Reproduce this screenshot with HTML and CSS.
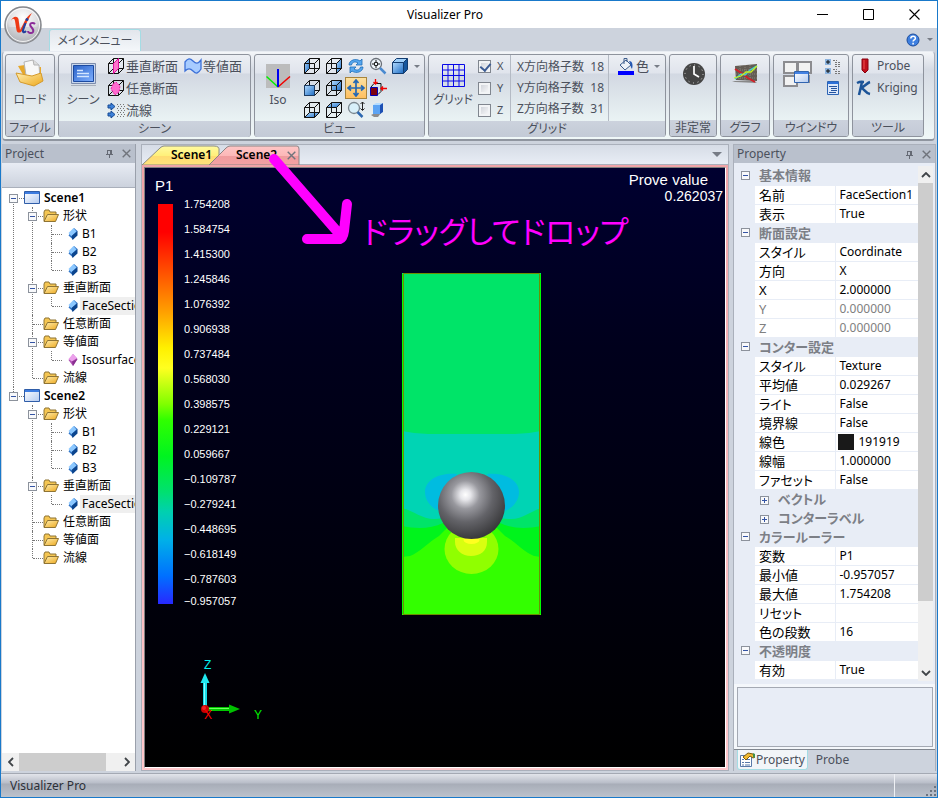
FILE: index.html
```html
<!DOCTYPE html>
<html lang="ja">
<head>
<meta charset="utf-8">
<title>Visualizer Pro</title>
<link rel="stylesheet" href="styles.css">
</head>
<body>
<svg class="defs" aria-hidden="true">
  <defs>
    <linearGradient id="blueFace" x1="0" y1="0" x2="1" y2="1"><stop offset="0" stop-color="#b4dcff"/><stop offset="1" stop-color="#1c6cc4"/></linearGradient>
    <linearGradient id="gold" x1="0" y1="0" x2="1" y2="1"><stop offset="0" stop-color="#ffeeb0"/><stop offset="1" stop-color="#eda81c"/></linearGradient>
    <linearGradient id="winBlue" x1="0" y1="0" x2="1" y2="1"><stop offset="0" stop-color="#fff"/><stop offset="1" stop-color="#b4cbf0"/></linearGradient>
    <linearGradient id="screen" x1="0" y1="0" x2="1" y2="1"><stop offset="0" stop-color="#2a62c8"/><stop offset="1" stop-color="#7fb0ff"/></linearGradient>
    <radialGradient id="orb" cx=".5" cy=".3" r=".7"><stop offset="0" stop-color="#fff"/><stop offset=".6" stop-color="#dcdcdf"/><stop offset="1" stop-color="#8d8f94"/></radialGradient>
    <radialGradient id="ball" cx=".41" cy=".34" r=".66"><stop offset="0" stop-color="#fff"/><stop offset=".12" stop-color="#e6e6ea"/><stop offset=".32" stop-color="#98989e"/><stop offset=".62" stop-color="#636368"/><stop offset="1" stop-color="#3a3a3c"/></radialGradient>
    <linearGradient id="tabYellow" x1="0" y1="0" x2="0" y2="1"><stop offset="0" stop-color="#fffaa0"/><stop offset=".5" stop-color="#fff07a"/><stop offset=".52" stop-color="#ffdc70"/><stop offset="1" stop-color="#ffe27c"/></linearGradient>
    <linearGradient id="tabPink" x1="0" y1="0" x2="0" y2="1"><stop offset="0" stop-color="#ffc6c6"/><stop offset=".5" stop-color="#fcb8b8"/><stop offset=".52" stop-color="#f09c9e"/><stop offset="1" stop-color="#f2a2a4"/></linearGradient>
    <symbol id="wire" viewBox="0 0 18 18"><path d="M1.5 6.5h10v10h-10zM6.5 1.5h10v10h-10zM1.5 6.5l5-5M11.5 6.5l5-5M1.5 16.5l5-5M11.5 16.5l5-5" fill="none" stroke="#111"/></symbol>
    <symbol id="cube-left" viewBox="0 0 18 18"><path d="M1.5 6.5l5-5v10l-5 5z" fill="url(#blueFace)"/><use href="#wire" width="18" height="18"/></symbol>
    <symbol id="cube-right" viewBox="0 0 18 18"><path d="M11.5 6.5l5-5v10l-5 5z" fill="url(#blueFace)"/><use href="#wire" width="18" height="18"/></symbol>
    <symbol id="cube-front" viewBox="0 0 18 18"><use href="#wire" width="18" height="18"/><path d="M1.5 6.5h10v10h-10z" fill="url(#blueFace)" stroke="#1c3c64"/></symbol>
    <symbol id="cube-back" viewBox="0 0 18 18"><path d="M6.5 1.5h10v10h-10z" fill="url(#blueFace)"/><use href="#wire" width="18" height="18"/></symbol>
    <symbol id="cube-bottom" viewBox="0 0 18 18"><path d="M1.5 16.5l5-5h10l-5 5z" fill="url(#blueFace)"/><use href="#wire" width="18" height="18"/></symbol>
    <symbol id="cube-top" viewBox="0 0 18 18"><path d="M1.5 6.5l5-5h10l-5 5z" fill="url(#blueFace)"/><use href="#wire" width="18" height="18"/></symbol>
    <symbol id="cube-solid" viewBox="0 0 18 18"><path d="M1.5 5.5l4-4h11l-4 4z" fill="#9fd0fa"/><path d="M12.5 5.5l4-4v11l-4 4z" fill="#16579e"/><path d="M1.500 5.500h11v11h-11z" fill="url(#blueFace)"/><path d="M1.500 5.500l4-4h11v11l-4 4h-11zM1.500 5.500h11v11M12.500 5.500l4-4" fill="none" stroke="#123c70"/></symbol>
    <symbol id="slice" viewBox="0 0 18 18"><use href="#wire" width="18" height="18"/><path d="M6.500 6.500l5-5v10l-5 5z" fill="#f7c" stroke="#e0109c"/></symbol>
    <symbol id="free-slice" viewBox="0 0 18 18"><use href="#wire" width="18" height="18"/><path d="M9 3l4 4-1 6-4 3-4-6 2-5z" fill="#ff6cd0" stroke="#f01ca8" stroke-dasharray="2 1"/></symbol>
    <symbol id="stream" viewBox="0 0 18 18"><path d="M1 4h3V2l4 3.500L4 9V7H1zM1 12h3v-2l4 3.500L4 17v-2H1z" fill="#3b80d8" stroke="#174a94"/><g stroke="#777" stroke-dasharray="1 2"><path d="M10 3.500h7M11 5.500h7M10 7.500h7M11 9.500h7M10 11.500h7M11 13.500h7M10 15.500h7"/></g></symbol>
    <symbol id="iso-wave" viewBox="0 0 18 18"><path d="M1 5c3-4 5-4 8-1s5 3 8-1v9c-3 5-5 5-8 2s-5-3-8 0z" fill="#a8ccff" stroke="#3c70d8" stroke-width="1.300"/></symbol>
    <symbol id="folder" viewBox="0 0 16 14"><path d="M1 12V3l1-2h4l1 2h6v3" fill="#f5c652" stroke="#8f7434"/><path d="M1 12.500l3.500-7H15.500l-3 7z" fill="url(#gold)" stroke="#8f7434"/></symbol>
    <symbol id="scene" viewBox="0 0 16 14"><path d="M.5.500h15v12H.5z" fill="url(#winBlue)" stroke="#2f5da8"/><path d="M1 1h14v2H1z" fill="#3d7ce0"/></symbol>
    <symbol id="gem" viewBox="0 0 10 12"><path d="M6 0l3.500 3L5 11.500.5 7.500z" fill="#2f74c8"/><path d="M5.500 0L.5 5l3 3.500 5-5z" fill="#8cc8ff"/><path d="M9.500 3v4.500L4.500 12 3.500 8z" fill="#0c458e"/></symbol>
    <symbol id="gem-pink" viewBox="0 0 10 12"><path d="M5 0l4.500 5L5 12 .5 6z" fill="#b050b4"/><path d="M5 0L.5 5 4 7.500 9 4z" fill="#eca0ec"/><path d="M9.500 5L5 12 4 7.500z" fill="#8a3090"/></symbol>
    <symbol id="pin" viewBox="0 0 9 9"><path d="M2.500 1v4.500M6.500 1v4.500M2 1.500h5M5.500 1v4M1 5.500h7M4.500 6v3" fill="none" stroke="#656a74"/></symbol>
    <symbol id="cross" viewBox="0 0 9 9"><path d="M.7.7l7.600 7.600M8.300.7L.7 8.300" fill="none" stroke="#70747c" stroke-width="1.400"/></symbol>
    <symbol id="chev" viewBox="0 0 10 6"><path d="M1 5l4-4 4 4" fill="none" stroke="#404448" stroke-width="1.800"/></symbol>
  </defs>
</svg>

<div class="window">
  <header class="titlebar">
    <h1>Visualizer Pro</h1>
    <div class="caption-buttons">
      <button aria-label="最小化"><svg width="11" height="11"><path d="M0 5.500h11" stroke="#000"/></svg></button>
      <button aria-label="最大化"><svg width="11" height="11"><path d="M.5.500h10v10H.5z" fill="none" stroke="#000"/></svg></button>
      <button aria-label="閉じる"><svg width="11" height="11"><path d="M.5.500l10 10M10.500.500l-10 10" stroke="#000" stroke-width="1.100"/></svg></button>
    </div>
  </header>
  <button class="app-orb" aria-label="アプリケーション">
    <svg width="40" height="40" viewBox="0 0 40 40">
      <circle cx="20" cy="20" r="18" fill="url(#orb)" stroke="#85878c" stroke-width="1.500"/>
      <path d="M4 22h32a16 16 0 0 1-32 0z" fill="#c4c6cb" opacity=".6"/>
      <circle cx="20" cy="20" r="16.500" fill="none" stroke="#fff" opacity=".8"/>
      <path d="M8 16c1-4 6-6 7.500-2l1.500 11c3-4 5-13 12-17-4 6-6 13-11 19-2 1-4 1-4.500-2l-1.500-9c-.5-3-2.500-3-4 0z" fill="#ee3a16"/>
      <path d="M22.500 18l-2.500 7c-.5 2.500 1 3 3 1" fill="none" stroke="#24409c" stroke-width="2.200"/>
      <circle cx="24" cy="14.500" r="1.500" fill="#24409c"/>
      <path d="M32 19c-2-2-6-1-4.500 2 1 2 4 3 2.500 6-1.500 2-5 1-5-1" fill="none" stroke="#8b2c98" stroke-width="2"/>
    </svg>
  </button>
  <nav class="tabstrip">
    <button class="ribbon-tab">メインメニュー</button>
    <button class="help" aria-label="ヘルプ">
      <svg width="14" height="14"><circle cx="7" cy="7" r="6" fill="#3d7fe0" stroke="#1c4c9c"/><path d="M4.800 5.500c0-3 4.600-3 4.600-.3 0 1.600-2.300 1.600-2.300 3.300M7.100 9.800v1.700" fill="none" stroke="#fff" stroke-width="1.500"/></svg>
      <i class="caret"></i>
    </button>
  </nav>

  <section class="ribbon" aria-label="リボン">
    <div class="group g-file">
      <div class="body">
        <button class="big">
          <svg width="30" height="30" viewBox="0 0 30 30"><path d="M3 7l7-1 5 3 11-1v14l-12 4z" fill="#e6a82c"/><path d="M9 3l9-2 6 5 1 14-13 3z" fill="#f8f8f8" stroke="#b4b4b4"/><path d="M18 1l1 5h5" fill="#ddd" stroke="#b4b4b4"/><path d="M1 14l16 3 9-3 2 8-9 5L5 23z" fill="url(#gold)" stroke="#d49a2c"/></svg>
          <span>ロード</span>
        </button>
      </div>
      <h2>ファイル</h2>
    </div>
    <div class="group g-scene">
      <div class="body">
        <button class="big">
          <svg width="30" height="30" viewBox="0 0 30 30"><path d="M3.500 4.500h24v20h-24z" fill="#c8d6ec" stroke="#7c8cac"/><path d="M5.500 6.500h20v16h-20z" fill="url(#screen)" stroke="#1c4aa0"/><path d="M9 11.500h6M9 14.500h12M9 17.500h12" stroke="#d4e6ff" stroke-width="1.500"/><path d="M3 26.500h25" stroke="#a8b0bc"/></svg>
          <span>シーン</span>
        </button>
        <div class="rows">
          <div class="row">
            <button class="small"><svg width="18" height="18"><use href="#slice"/></svg>垂直断面</button>
            <button class="small"><svg width="18" height="18"><use href="#iso-wave"/></svg>等値面</button>
          </div>
          <div class="row"><button class="small"><svg width="18" height="18"><use href="#free-slice"/></svg>任意断面</button></div>
          <div class="row"><button class="small"><svg width="18" height="18"><use href="#stream"/></svg>流線</button></div>
        </div>
      </div>
      <h2>シーン</h2>
    </div>
    <div class="group g-view">
      <div class="body">
        <button class="big">
          <svg width="30" height="30" viewBox="0 0 30 30"><path d="M3 5h24v24H3z" fill="#bcbcbc"/><path d="M15 28L3.500 17.500" stroke="#00f000" stroke-width="1.500"/><path d="M15 28l12-10.500" stroke="#f00000" stroke-width="1.500"/><path d="M15 10v18" stroke="#0000f0" stroke-width="2"/></svg>
          <span class="latin">Iso</span>
        </button>
        <div class="view-grid">
          <button aria-label="左"><svg width="18" height="18"><use href="#cube-left"/></svg></button>
          <button aria-label="右"><svg width="18" height="18"><use href="#cube-right"/></svg></button>
          <button aria-label="更新"><svg width="18" height="18"><path d="M2 8c0-5 7-7 11-4l2-2v6H9l2-2C8 4 5 5 4.500 8zM16 10c0 5-7 7-11 4l-2 2v-6h6l-2 2c3 2 6 1 6.500-2z" fill="#58a8f0" stroke="#1c6cb8" stroke-width=".8"/></svg></button>
          <button aria-label="全体"><svg width="18" height="18"><circle cx="7" cy="7" r="5.500" fill="#eef4fa" stroke="#6a7078" stroke-width="1.300"/><path d="M7 3v8M3 7h8" stroke="#111" stroke-dasharray="2 4"/><path d="M5.500 5.500h3v3h-3z" fill="none" stroke="#222"/><path d="M11 11l5.500 5.500" stroke="#4a8ad0" stroke-width="2.500"/></svg></button>
          <button class="wide" aria-label="表示"><svg width="18" height="18"><use href="#cube-solid"/></svg><i class="caret"></i></button>
          <button aria-label="前"><svg width="18" height="18"><use href="#cube-front"/></svg></button>
          <button aria-label="後"><svg width="18" height="18"><use href="#cube-back"/></svg></button>
          <button class="active" aria-label="移動"><svg width="18" height="18"><path d="M9 1v16M1 9h16M6.500 4L9 1l2.500 3M6.500 14L9 17l2.500-3M4 6.500L1 9l3 2.500M14 6.500L17 9l-3 2.500" fill="none" stroke="#2468b4" stroke-width="1.700"/></svg></button>
          <button class="span2" aria-label="回転"><svg width="18" height="18"><path d="M1.500 8.500h7v8h-7z" fill="#7c0010" stroke="#0000b8"/><path d="M2 8l3-3.500h7v8l-3 3" fill="none" stroke="#111"/><path d="M6.500 0v5M4.500 3l2 2 2-2M18 9.500h-6M14 7.500l-2 2 2 2" fill="none" stroke="#f00000" stroke-width="1.300"/></svg></button>
          <button aria-label="下"><svg width="18" height="18"><use href="#cube-bottom"/></svg></button>
          <button aria-label="上"><svg width="18" height="18"><use href="#cube-top"/></svg></button>
          <button aria-label="拡大"><svg width="18" height="18"><circle cx="7" cy="7" r="5.500" fill="#d8f0fa" stroke="#7c8890" stroke-width="1.300"/><path d="M10.500 11l5 5" stroke="#2c68b0" stroke-width="2.500"/><path d="M15.500 1v8M13.500 3l2-2 2 2M13.500 7.500l2 2 2-2" fill="none" stroke="#222"/></svg></button>
          <button aria-label="影"><svg width="18" height="18"><path d="M2 14l4-2h6l-3 4H5z" fill="#8c8c8c"/><path d="M4 4h7v9H4z" fill="#5ca4f4"/><path d="M4 4l3-2h7l-3 2z" fill="#b4dcff"/><path d="M11 4l3-2v9l-3 2z" fill="#1c50b4"/></svg></button>
        </div>
      </div>
      <h2>ビュー</h2>
    </div>
    <div class="group g-grid">
      <div class="body">
        <button class="big">
          <svg width="30" height="30" viewBox="0 0 30 30"><path d="M4.500 5.500h22v22h-22zM10 5v23M15.500 5v23M21 5v23M4 11h23M4 16.500h23M4 22h23" fill="none" stroke="#0808e8"/></svg>
          <span>グリッド</span>
        </button>
        <div class="rows checks">
          <label><input type="checkbox" checked>X</label>
          <label><input type="checkbox">Y</label>
          <label><input type="checkbox">Z</label>
        </div>
        <dl class="counts">
          <div><dt>X方向格子数</dt><dd>18</dd></div>
          <div><dt>Y方向格子数</dt><dd>18</dd></div>
          <div><dt>Z方向格子数</dt><dd>31</dd></div>
        </dl>
        <button class="small color"><svg width="18" height="18"><path d="M3 8l6-5 5 5-6 5z" fill="#eef2f8" stroke="#3c5c8c"/><path d="M7 7V1.500h3V5" fill="none" stroke="#3c5c8c"/><path d="M12 4c4 0 4 5 3 8-2-2-1-5-3-8z" fill="#2458b4"/><path d="M1 14h16v4H1z" fill="#0000ff"/></svg>色<i class="caret"></i></button>
      </div>
      <h2>グリッド</h2>
    </div>
    <div class="group g-time">
      <div class="body">
        <button class="big" aria-label="非定常">
          <svg width="30" height="30" viewBox="0 0 30 30"><circle cx="15" cy="15" r="11" fill="#454545"/><circle cx="15" cy="15" r="9" fill="none" stroke="#ddd" stroke-dasharray="1 3.700"/><path d="M15 7v8l5 3" fill="none" stroke="#fff" stroke-width="1.700"/></svg>
        </button>
      </div>
      <h2>非定常</h2>
    </div>
    <div class="group g-chart">
      <div class="body">
        <button class="big" aria-label="グラフ">
          <svg width="30" height="30" viewBox="0 0 30 30"><path d="M5 7l22-2v17L6 21z" fill="#635c54"/><path d="M2 22h22l3 2-22-1z" fill="#888"/><path d="M6 11h21M6 15h21M6 19h21M10 7v14M15 6v15M20 6v15" stroke="#8a8278" stroke-dasharray="1 1"/><path d="M5 10l8 5 5 4 7 4" fill="none" stroke="#d02028" stroke-width="2"/><path d="M5 20l6-5 4 1 5-5 7-4" fill="none" stroke="#40d0d0" stroke-width="1.500"/><path d="M4 19l7-2 5-4 5 0 6-6" fill="none" stroke="#c8f020" stroke-width="1.300"/></svg>
        </button>
      </div>
      <h2>グラフ</h2>
    </div>
    <div class="group g-window">
      <div class="body">
        <button class="big" aria-label="ウインドウ配置">
          <svg width="32" height="30" viewBox="0 0 32 30"><path d="M2 3h13v11H2zM16 3h13v11H16zM2 17h13v10H2zM16 17h11v6H16z" fill="#f2f2f2" stroke="#8c8c90" stroke-width="2"/><path d="M12.500 12.500h14v11h-14z" fill="url(#winBlue)" stroke="#3064b0"/><path d="M13 13h13v2H13z" fill="#4482e4"/></svg>
        </button>
        <div class="rows">
          <button class="icon" aria-label="ツリー"><svg width="18" height="18"><path d="M1 2h6v6H1zM1 11h6v6H1z" fill="#8cb4e0"/><path d="M4 3v4M2 5h4M4 12v4M2 14h4" stroke="#111"/><path d="M9 3.500h4M11 5.500h6M11 7.500h6M9 12.500h4M11 14.500h6M11 16.500h6M11 9.500h6" stroke="#777" stroke-dasharray="2 1"/></svg></button>
          <button class="icon" aria-label="一覧"><svg width="18" height="18"><path d="M3.500 2.500h11v13h-11z" fill="#dce8fa" stroke="#2c64b4"/><path d="M4 3h10v2H4z" fill="#2c70d8"/><path d="M5 7.500h8M7 9.500h6M7 11.500h6M5 13.500h7" stroke="#2454a0"/></svg></button>
        </div>
      </div>
      <h2>ウインドウ</h2>
    </div>
    <div class="group g-tool">
      <div class="body">
        <div class="rows">
          <button class="small latin"><svg width="18" height="18"><path d="M9 2h6v11l-3 3-3-3z" fill="#c0101c" stroke="#880010"/><path d="M11 3v9" stroke="#f05050"/></svg>Probe</button>
          <button class="small latin"><svg width="18" height="18"><path d="M9 3L6 16M4 4c4-2 6-1 7-1M17 3c-3 1-6 5-9 6 3 0 4 5 9 6" fill="none" stroke="#1c5498" stroke-width="2.500"/></svg>Kriging</button>
        </div>
      </div>
      <h2>ツール</h2>
    </div>
  </section>

  <main>
    <aside class="pane project">
      <header><h2>Project</h2><button aria-label="固定"><svg width="9" height="9"><use href="#pin"/></svg></button><button aria-label="閉じる"><svg width="9" height="9"><use href="#cross"/></svg></button></header>
      <div class="toolbar"></div>
      <div class="tree">
        <ul>
          <li><div class="node"><button class="toggle" aria-label="折りたたむ"></button><svg width="16" height="14"><use href="#scene"/></svg><b>Scene1</b></div>
            <ul>
              <li><div class="node"><button class="toggle" aria-label="折りたたむ"></button><svg width="16" height="14"><use href="#folder"/></svg><span>形状</span></div>
                <ul class="leaves">
                  <li><div class="node"><svg width="10" height="12"><use href="#gem"/></svg><span>B1</span></div></li>
                  <li><div class="node"><svg width="10" height="12"><use href="#gem"/></svg><span>B2</span></div></li>
                  <li><div class="node"><svg width="10" height="12"><use href="#gem"/></svg><span>B3</span></div></li>
                </ul>
              </li>
              <li><div class="node"><button class="toggle" aria-label="折りたたむ"></button><svg width="16" height="14"><use href="#folder"/></svg><span>垂直断面</span></div>
                <ul class="leaves"><li><div class="node"><svg width="10" height="12"><use href="#gem"/></svg><span class="selected">FaceSection1</span></div></li></ul>
              </li>
              <li><div class="node"><svg width="16" height="14"><use href="#folder"/></svg><span>任意断面</span></div></li>
              <li><div class="node"><button class="toggle" aria-label="折りたたむ"></button><svg width="16" height="14"><use href="#folder"/></svg><span>等値面</span></div>
                <ul class="leaves"><li><div class="node"><svg width="10" height="12"><use href="#gem-pink"/></svg><span>Isosurface1</span></div></li></ul>
              </li>
              <li><div class="node"><svg width="16" height="14"><use href="#folder"/></svg><span>流線</span></div></li>
            </ul>
          </li>
          <li><div class="node"><button class="toggle" aria-label="折りたたむ"></button><svg width="16" height="14"><use href="#scene"/></svg><b>Scene2</b></div>
            <ul>
              <li><div class="node"><button class="toggle" aria-label="折りたたむ"></button><svg width="16" height="14"><use href="#folder"/></svg><span>形状</span></div>
                <ul class="leaves">
                  <li><div class="node"><svg width="10" height="12"><use href="#gem"/></svg><span>B1</span></div></li>
                  <li><div class="node"><svg width="10" height="12"><use href="#gem"/></svg><span>B2</span></div></li>
                  <li><div class="node"><svg width="10" height="12"><use href="#gem"/></svg><span>B3</span></div></li>
                </ul>
              </li>
              <li><div class="node"><button class="toggle" aria-label="折りたたむ"></button><svg width="16" height="14"><use href="#folder"/></svg><span>垂直断面</span></div>
                <ul class="leaves"><li><div class="node"><svg width="10" height="12"><use href="#gem"/></svg><span class="selected">FaceSection1</span></div></li></ul>
              </li>
              <li><div class="node"><svg width="16" height="14"><use href="#folder"/></svg><span>任意断面</span></div></li>
              <li><div class="node"><svg width="16" height="14"><use href="#folder"/></svg><span>等値面</span></div></li>
              <li><div class="node"><svg width="16" height="14"><use href="#folder"/></svg><span>流線</span></div></li>
            </ul>
          </li>
        </ul>
      </div>
      <div class="hscroll">
        <button class="to-left" aria-label="左へ"><svg width="10" height="6"><use href="#chev"/></svg></button>
        <div class="track"><div class="thumb"></div></div>
        <button class="to-right" aria-label="右へ"><svg width="10" height="6"><use href="#chev"/></svg></button>
      </div>
    </aside>

    <section class="center">
      <div class="doc-tabs">
        <button class="doc-tab first"><svg width="92" height="20"><path d="M0 20L18 3q2-2 4-2h50q6 0 5 5v14z" fill="url(#tabYellow)" stroke="#8c8c84"/></svg><span>Scene1</span></button>
        <button class="doc-tab second"><svg width="92" height="20"><path d="M0 20L17 3q2-2 4-2h67q2 0 2 3v16z" fill="url(#tabPink)" stroke="#8c8484"/></svg><span>Scene2</span><svg class="x" width="9" height="9"><use href="#cross"/></svg></button>
        <button class="doc-menu" aria-label="タブ一覧"><i class="caret"></i></button>
      </div>
      <div class="frame">
        <div class="canvas">
          <div class="legend">
            <h3>P1</h3>
            <div class="scale">
              <div class="ramp"></div>
              <ol>
                <li>1.754208</li><li>1.584754</li><li>1.415300</li><li>1.245846</li><li>1.076392</li><li>0.906938</li><li>0.737484</li><li>0.568030</li><li>0.398575</li><li>0.229121</li><li>0.059667</li><li>−0.109787</li><li>−0.279241</li><li>−0.448695</li><li>−0.618149</li><li>−0.787603</li><li>−0.957057</li>
              </ol>
            </div>
            <svg class="axes" width="80" height="70">
              <text x="6" y="10" fill="#00f0f0">Z</text><text x="56" y="60" fill="#00f000">Y</text>
              <path d="M5 22h4v29H5z" fill="#18dce8"/><path d="M6.500 24v26" stroke="#8ff"/><path d="M2.500 24L7 14l4.500 10z" fill="#20e8f0"/>
              <path d="M8 48h24v4H8z" fill="#00c800"/><path d="M9 49.500h22" stroke="#70ff60"/><path d="M31 45.500l11 4.500-11 4.500z" fill="#00c000"/>
              <circle cx="7" cy="50" r="4" fill="#c80000"/><circle cx="6" cy="49" r="2" fill="#f02020"/>
              <text x="6" y="60" fill="#ff0000">X</text>
            </svg>
          </div>
          <div class="probe"><div>Prove value</div><div class="num">0.262037</div></div>
          <svg class="model" width="139" height="342" viewBox="0 0 139 342">
            <path d="M0 0h139v342H0z" fill="#00e468"/>
            <path d="M0 158l12 2 14 1h87l14-1 12-2v77c-10 3-19 12-32 11l-30-2H62l-30 2C20 246 12 238 0 235z" fill="#00d4b4"/>
            <path d="M0 253c14 3 29 3 41-3h57c12 6 27 6 41 3v89H0z" fill="#00f41c"/>
            <path d="M0 284l8-1c9-3 20-15 29-20l8-8h50l8 8c9 5 20 17 29 20l7 1v58H0z" fill="#33ff00"/>
            <path d="M55 201c-14-2-32 4-32 18 0 9 7 17 15 19zM85 201c14-2 32 4 32 18 0 9-7 17-15 19z" fill="#00bce0"/>
            <ellipse cx="69.500" cy="276" rx="27" ry="25" fill="#90ff00"/>
            <path d="M53 265v4c0 8 7 14 16 14s16-5 16-14v-4z" fill="#d8ff10"/>
            <ellipse cx="69.500" cy="267" rx="8" ry="4" fill="#ffff20"/>
            <circle cx="69.500" cy="232.500" r="33.500" fill="url(#ball)"/>
            <path d="M1.500.500h136v341H1.500z" fill="none" stroke="#6c9000"/>
            <path d="M.5 1v340M138.500 1v340" stroke="#00ff00"/>
          </svg>
        </div>
      </div>
      <svg class="drag-arrow" width="100" height="106" aria-hidden="true"><path d="M14 16l68 78M47 96h33q3-1 4-8l3-27" fill="none" stroke="#ff00ff" stroke-width="10" stroke-linecap="round" stroke-linejoin="round"/></svg>
      <p class="drag-note">ドラッグしてドロップ</p>
    </section>

    <aside class="pane property">
      <header><h2>Property</h2><button aria-label="固定"><svg width="9" height="9"><use href="#pin"/></svg></button><button aria-label="閉じる"><svg width="9" height="9"><use href="#cross"/></svg></button></header>
      <div class="sheet">
        <div class="grid-clip">
          <table>
            <colgroup><col class="c-gutter"><col class="c-name"><col></colgroup>
            <tbody>
            <tr class="cat"><td><button class="toggle" aria-label="折りたたむ"></button></td><th colspan="2">基本情報</th></tr>
            <tr><td></td><th>名前</th><td>FaceSection1</td></tr>
            <tr><td></td><th>表示</th><td>True</td></tr>
            <tr class="cat"><td><button class="toggle" aria-label="折りたたむ"></button></td><th colspan="2">断面設定</th></tr>
            <tr><td></td><th>スタイル</th><td>Coordinate</td></tr>
            <tr><td></td><th>方向</th><td>X</td></tr>
            <tr><td></td><th>X</th><td>2.000000</td></tr>
            <tr class="off"><td></td><th>Y</th><td>0.000000</td></tr>
            <tr class="off"><td></td><th>Z</th><td>0.000000</td></tr>
            <tr class="cat"><td><button class="toggle" aria-label="折りたたむ"></button></td><th colspan="2">コンター設定</th></tr>
            <tr><td></td><th>スタイル</th><td>Texture</td></tr>
            <tr><td></td><th>平均値</th><td>0.029267</td></tr>
            <tr><td></td><th>ライト</th><td>False</td></tr>
            <tr><td></td><th>境界線</th><td>False</td></tr>
            <tr><td></td><th>線色</th><td><span class="swatch"></span>191919</td></tr>
            <tr><td></td><th>線幅</th><td>1.000000</td></tr>
            <tr><td></td><th>ファセット</th><td>False</td></tr>
            <tr class="cat sub"><td></td><th colspan="2"><button class="toggle plus" aria-label="展開"></button>ベクトル</th></tr>
            <tr class="cat sub"><td></td><th colspan="2"><button class="toggle plus" aria-label="展開"></button>コンターラベル</th></tr>
            <tr class="cat"><td><button class="toggle" aria-label="折りたたむ"></button></td><th colspan="2">カラールーラー</th></tr>
            <tr><td></td><th>変数</th><td>P1</td></tr>
            <tr><td></td><th>最小値</th><td>-0.957057</td></tr>
            <tr><td></td><th>最大値</th><td>1.754208</td></tr>
            <tr><td></td><th>リセット</th><td></td></tr>
            <tr><td></td><th>色の段数</th><td>16</td></tr>
            <tr class="cat"><td><button class="toggle" aria-label="折りたたむ"></button></td><th colspan="2">不透明度</th></tr>
            <tr><td></td><th>有効</th><td>True</td></tr>
            </tbody>
          </table>
        </div>
        <div class="vscroll">
          <button aria-label="上へ"><svg width="10" height="6"><use href="#chev"/></svg></button>
          <div class="track"><div class="thumb"></div></div>
          <button class="to-down" aria-label="下へ"><svg width="10" height="6"><use href="#chev"/></svg></button>
        </div>
      </div>
      <div class="desc-wrap"><div class="desc"></div></div>
      <div class="pane-tabs">
        <button class="on"><svg width="16" height="16"><path d="M1.500 3.500h11v11h-11z" fill="#fff" stroke="#5878a8"/><path d="M3 7.500h2M6 7.500h5M3 10.500h2M6 10.500h5M3 13h2M6 13h5" stroke="#5878a8"/><path d="M4 5l5-4 5 1 2 3-2 1-3-2-4 4z" fill="#f0b830" stroke="#7c5c10"/><path d="M14 1l2 1v4l-2-1z" fill="#409048"/></svg>Property</button>
        <button>Probe</button>
      </div>
    </aside>
  </main>

  <footer class="status"><span>Visualizer Pro</span><div class="corner"><svg width="12" height="12"><path d="M9 1h2v2H9zM5 5h2v2H5zM9 5h2v2H9zM1 9h2v2H1zM5 9h2v2H5zM9 9h2v2H9z" fill="#6c7480"/></svg></div></footer>
</div>
</body>
</html>
```
FILE: styles.css
```css
* { box-sizing: border-box; }

body {
  margin: 0;
  font-family: "Noto Sans", "Noto Sans CJK JP", sans-serif;
  font-size: 12px;
  line-height: 18px;
  font-feature-settings: "palt";
  color: #000;
}

h1, h2, h3, p, ul, ol, dl, dd { margin: 0; padding: 0; font-weight: 400; font-size: inherit; }
ul, ol { list-style: none; }
svg { display: block; flex: none; }
.defs { position: absolute; width: 0; height: 0; }

button {
  font: inherit;
  font-feature-settings: inherit;
  color: inherit;
  background: none;
  border: 0;
  padding: 0;
  margin: 0;
}

.window {
  position: relative;
  display: flex;
  flex-direction: column;
  height: 100vh;
  border: 1px solid #1979ca;
  background: #cdd3dd;
  overflow: hidden;
}

.caret {
  flex: none;
  width: 0;
  height: 0;
  border: 3px solid transparent;
  border-top-color: #777c86;
  border-bottom: 0;
}

/* Title bar */
.titlebar {
  position: relative;
  display: flex;
  align-items: center;
  height: 27px;
  background: #fff;
}
.titlebar h1 { flex: 1; text-align: center; padding-left: 90px; }
.caption-buttons { display: flex; }
.caption-buttons button { display: grid; place-items: center; width: 46px; height: 27px; }

.app-orb { position: absolute; left: 2px; top: 4px; z-index: 2; }

.tabstrip {
  display: flex;
  align-items: flex-end;
  justify-content: space-between;
  height: 23px;
  padding: 0 4px 0 48px;
  background: #cdd3dd;
}
.ribbon-tab {
  height: 22px;
  width: 92px;
  color: #4b505c;
  border: 1px solid #a4dce4;
  border-bottom: 0;
  border-radius: 3px 3px 0 0;
  background: linear-gradient(#e2e6ec, #f4f7fa);
}
.help { display: flex; align-items: center; gap: 7px; height: 23px; }

/* Ribbon */
.ribbon {
  display: flex;
  gap: 3px;
  margin: 0 2px 0 1px;
  padding: 2px;
  height: 90px;
  color: #4b505c;
  font-size: 13px;
  border: 1px solid #a9afba;
  border-top-color: #e8ecf2;
  border-bottom: 2px solid #8f959f;
  border-radius: 4px;
  background: linear-gradient(#f4f6f9, #d6dbe4 20%, #f0f8f8);
}
.group {
  display: flex;
  flex-direction: column;
  flex: none;
  border: 1px solid #8e939d;
  border-radius: 3px;
  background: linear-gradient(#eceff4, #e0e4ec 18px, #d2d8e2 19px, #eaf3f4 66px);
}
.body { display: flex; flex: 1; }
.group h2 {
  text-align: center;
  font-size: 12px;
  line-height: 16px;
  height: 16px;
  background: linear-gradient(#ccd2dd, #c3cad6);
  border-radius: 0 0 2px 2px;
}
.g-file { width: 50px; }
.g-scene { width: 193px; }
.g-view { width: 171px; }
.g-grid { width: 238px; }
.g-time { width: 48px; }
.g-chart { width: 50px; }
.g-window { width: 76px; }
.g-tool { width: 72px; }

.big {
  display: flex;
  flex-direction: column;
  align-items: center;
  gap: 2px;
  width: 48px;
  padding-top: 4px;
  flex: none;
  font-size: 12px;
}
.latin { font-size: 12px; }
.rows { display: flex; flex-direction: column; }
.row { display: flex; gap: 6px; }
.small { display: flex; align-items: center; gap: 1px; height: 22px; }
.small.latin { gap: 6px; }
.icon { display: grid; place-items: center; width: 22px; height: 22px; }

.g-view .big { width: 46px; }
.g-view .view-grid {
  display: grid;
  grid-template-columns: repeat(4, 22px) 32px;
  grid-auto-rows: 22px;
}
.view-grid button { display: grid; place-items: center; }
.view-grid .wide { display: flex; align-items: center; gap: 5px; padding-left: 2px; }
.view-grid .span2 { grid-column: 4 / span 2; justify-content: start; padding-left: 2px; }
.view-grid .active { border: 1px solid #a8843c; background: linear-gradient(#fce0a0, #ffc060); }

.checks { padding-left: 1px; width: 34px; border-right: 1px solid #b4bac4; }
.checks label { display: flex; align-items: center; gap: 6px; height: 22px; font-size: 11px; }
.checks input {
  appearance: none;
  flex: none;
  width: 13px;
  height: 13px;
  margin: 0;
  border: 1px solid #80868f;
  background: linear-gradient(135deg, #c8ccd4, #fff);
  box-shadow: inset 0 0 0 2px #f2f4f6;
}
.checks input:checked::before {
  content: "";
  display: block;
  width: 5px;
  height: 8px;
  margin-left: 3px;
  border: solid #3c5c94;
  border-width: 0 2px 2px 0;
  transform: rotate(40deg);
}
.counts { padding: 1px 4px 0 6px; border-right: 1px solid #b4bac4; }
.counts div { display: flex; align-items: center; justify-content: space-between; gap: 3px; height: 21px; width: 87px; white-space: nowrap; font-size: 12px; }
.color { padding-left: 8px; }
.color .caret { margin-left: 4px; }

/* Work area */
main { display: flex; flex: 1; min-height: 0; padding: 3px 1px 2px 1px; }
.pane { display: flex; flex-direction: column; flex: none; min-height: 0; }
.pane header {
  display: flex;
  align-items: center;
  height: 19px;
  padding: 0 4px 0 3px;
  background: #b9c0cc;
  color: #4b505c;
}
.pane header h2 { flex: 1; }
.pane header button { margin-left: 8px; }
.project { width: 134px; border-right: 1px solid #9aa0ab; background: #fff; }
.project .toolbar { height: 25px; background: linear-gradient(#e8ecf4, #ccd2dd); border-bottom: 1px solid #aab0bb; }

.tree { flex: 1; overflow: hidden; padding: 1px 0 0 2px; white-space: nowrap; font-size: 12px; }
.tree ul ul { margin-left: 19px; }
.tree li { position: relative; }
.tree li::before {
  content: "";
  position: absolute;
  left: 9px;
  top: 0;
  bottom: 0;
  border-left: 1px dotted #777;
}
.tree > ul > li:first-child::before { top: 9px; }
.tree li:last-child::before { bottom: auto; height: 9px; }
.node { position: relative; display: flex; align-items: center; height: 18px; padding-left: 20px; }
.node::before {
  content: "";
  position: absolute;
  left: 10px;
  top: 9px;
  width: 10px;
  border-top: 1px dotted #777;
}
.node span, .node b { padding: 0 2px; margin-left: 2px; }
.leaves .node { padding-left: 26px; }
.node .selected { background: #efefef; }
.node b { font-weight: 600; }

.toggle {
  position: relative;
  flex: none;
  width: 9px;
  height: 9px;
  border: 1px solid #8c929c;
  background: linear-gradient(90deg, #3454a4, #3454a4) center / 5px 1px no-repeat, #f8f9fb;
}
.toggle.plus {
  background: linear-gradient(90deg, #3454a4, #3454a4) center / 5px 1px no-repeat, linear-gradient(#3454a4, #3454a4) center / 1px 5px no-repeat, #f8f9fb;
}
.node .toggle { position: absolute; left: 5px; top: 5px; z-index: 1; }

.hscroll { display: flex; height: 18px; background: #f0f0f0; }
.hscroll button { display: grid; place-items: center; width: 17px; }
.hscroll .track { flex: 1; }
.hscroll .thumb { width: 88%; height: 18px; background: #cdcdcd; }
.to-left svg { transform: rotate(-90deg); }
.to-right svg { transform: rotate(90deg); }

/* Document area */
.center {
  position: relative;
  display: flex;
  flex-direction: column;
  flex: 1;
  min-width: 0;
  margin: 0 4px 0 5px;
  border: 1px solid #aab0bb;
}
.doc-tabs { display: flex; height: 20px; background: linear-gradient(#d6dce6, #e8edf5); border-bottom: 1px solid #aab0bb; }
.doc-tab { position: relative; display: flex; align-items: center; height: 20px; font-weight: 600; }
.doc-tab > svg:first-child { position: absolute; left: 0; top: 0; }
.doc-tab span { position: relative; }
.doc-tab.first { width: 67px; padding-left: 29px; z-index: 0; }
.doc-tab.second { width: 92px; padding-left: 27px; gap: 10px; z-index: 1; }
.doc-tab .x { position: relative; }
.doc-menu { margin-left: auto; padding: 0 6px; }
.doc-menu .caret { display: block; border-width: 5px; border-bottom: 0; }

.frame { flex: 1; min-height: 0; padding: 2px; background: linear-gradient(#f0a4a8, #ffc8cc); }
.canvas {
  position: relative;
  height: 100%;
  border: 1px solid #fff;
  border-top: 1px solid #808080;
  border-left: 1px solid #808080;
  background: linear-gradient(#000030, #00001c 30%, #00000c 70%, #000);
  color: #fff;
  font-family: "Liberation Sans", sans-serif;
  overflow: hidden;
}
.legend { position: absolute; left: 10px; top: 9px; }
.legend h3 { font-size: 15px; line-height: 18px; }
.scale { display: flex; gap: 11px; padding-left: 3px; margin-top: 9px; }
.ramp {
  width: 15px;
  height: 400px;
  background: linear-gradient(#ff0000 0, #ff0000 7%, #ff6000 19%, #ffa000 27%, #fff000 36%, #ffff20 41%, #80ff00 50%, #30ff00 54%, #00f420 63%, #00e070 72%, #00d0b0 77%, #00b0e8 84%, #0070ff 93%, #2828ff 100%);
}
.scale ol { margin-top: -12px; font-size: 11px; }
.scale li { height: 25px; line-height: 25px; }
.scale li:last-child { height: 19px; line-height: 19px; }
.axes { margin: 48px 0 0 43px; font-size: 12px; }
.probe { position: absolute; right: 2px; top: 4px; text-align: right; font-size: 15px; line-height: 16px; }
.probe div:first-child { padding-right: 15px; }
.probe .num { font-size: 14px; }
.model { position: absolute; left: 257px; top: 105px; }

.drag-arrow { position: absolute; left: 118px; top: -2px; z-index: 3; }
.drag-arrow, .drag-note { pointer-events: none; }
.drag-note {
  position: absolute;
  left: 221px;
  top: 63px;
  z-index: 3;
  color: #ff00ff;
  font-family: "Noto Sans CJK JP", sans-serif;
  font-size: 31px;
  line-height: 44px;
  white-space: nowrap;
}

/* Property pane */
.property { width: 203px; border: 1px solid #aab0bb; border-bottom: 0; background: #cdd3dd; }
.property header { height: 18px; }
.sheet { display: flex; flex: 1; min-height: 0; padding: 3px 2px 3px 0; background: #e8edf6; }
.grid-clip { flex: 1; min-width: 0; overflow: hidden; }
table { width: 100%; border-collapse: collapse; table-layout: fixed; }
.c-gutter { width: 21px; }
.c-name { width: 80px; }
tr { height: 19px; }
td, th { padding: 0 0 0 4px; height: 19px; line-height: 18px; text-align: left; font-weight: 400; white-space: nowrap; background: #fff; border-bottom: 1px solid #e8edf6; }
th { font-size: 13px; border-right: 1px solid #e8edf6; }
tr > td:first-child { background: #e8edf6; padding: 0 0 0 7px; }
tr > td:first-child .toggle { display: block; }
.cat th { background: #e8edf6; color: #7c7f86; font-weight: 600; }
.sub .toggle { display: inline-block; margin: 0 9px 0 1px; }
.off { color: #808080; }
.swatch { display: inline-block; width: 16px; height: 16px; margin: 0 5px 0 -2px; vertical-align: middle; background: #191919; }
.vscroll { display: flex; flex-direction: column; width: 15px; background: #f0f0f0; }
.vscroll button { display: grid; place-items: center; height: 17px; }
.vscroll .track { flex: 1; }
.vscroll .thumb { height: 87%; background: #cdcdcd; }
.to-down svg { transform: rotate(180deg); }
.desc-wrap { padding: 3px 2px 2px 3px; background: #f4f7fb; border-bottom: 1px solid #80868f; }
.desc { height: 60px; border: 1px solid #a4a9b3; background: #e8edf6; }
.pane-tabs { display: flex; gap: 4px; height: 21px; padding-left: 3px; color: #4b505c; }
.pane-tabs button { display: flex; align-items: center; gap: 1px; height: 20px; padding: 0 4px; }
.pane-tabs .on { border: 1px solid #a4dce4; border-top: 0; border-radius: 0 0 3px 3px; background: #f2f5f8; padding: 0 2px 0 1px; }

/* Status bar */
.status {
  display: flex;
  align-items: center;
  justify-content: space-between;
  height: 24px;
  padding-left: 9px;
  color: #2c3038;
  border-top: 1px solid #a4a9b3;
  background: linear-gradient(#e2e4ea, #b8bdc8 9px, #a8adb8 10px, #bcc2cc);
}
.corner { display: flex; align-items: flex-end; justify-content: flex-end; width: 43px; height: 23px; border-left: 1px solid #eef0f4; }
```
